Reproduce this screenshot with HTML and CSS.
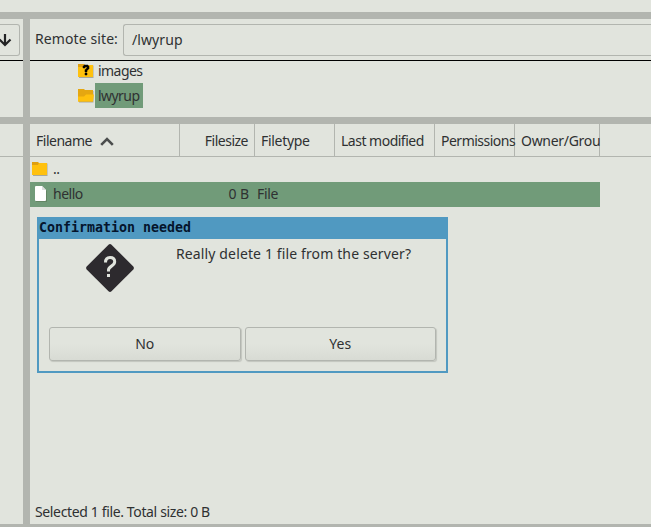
FILE: index.html
```
<!DOCTYPE html>
<html lang="en">
<head>
<meta charset="utf-8">
<title>Remote site</title>
<link rel="stylesheet" href="styles.css">
</head>
<body>
<div class="window">
  <div class="strip"></div>
  <div class="panes">
    <section class="pane local-tree">
      <div class="site-bar local-bar">
        <div class="dropdown">
          <svg width="14" height="14" viewBox="0 0 14 14"><path d="M7 1v11M1.500 6.500 7 12l5.500-5.500" fill="none" stroke="#222324" stroke-width="2.200"/></svg>
        </div>
      </div>
    </section>
    <section class="pane remote-tree">
      <div class="site-bar">
        <span class="site-label">Remote site:</span>
        <div class="path"><span class="path-text">/lwyrup</span></div>
      </div>
      <div class="tree">
        <div class="node">
          <svg width="16" height="15" viewBox="0 0 16 15"><path d="M1 2.500h14.500V15H1z" fill="#a8a99c"/><path d="M0 1h6l1 1h8v12H0z" fill="#e0a010"/><path d="M0 4h5l2-2h8v12H0z" fill="#ffc10e"/><path d="M5 5V3h1V2h4v1h1v3h-1v1H9v2H7V6.500h1v-1h1V4H7v1zM7 10h2v2H7z" fill="#000" stroke="#000" stroke-width=".5"/></svg>
          <span class="node-name images">images</span>
        </div>
        <div class="node">
          <svg width="16" height="15" viewBox="0 0 16 15"><path d="M1 3h14.500v11.500H1z" fill="#a8a99c"/><path d="M0 1h6l1 1h8v11.500H0z" fill="#e5a711"/><path d="M0 8.500h6l2-2h8l-1 7H0z" fill="#ffc10e"/></svg>
          <span class="node-name lwyrup selected">lwyrup</span>
        </div>
      </div>
    </section>
    <section class="pane local-list"><div class="columns"></div></section>
    <section class="pane remote-list">
      <div class="columns">
        <div class="column"><span class="c-name">Filename</span><svg class="sort" width="14" height="9" viewBox="0 0 14 9"><path d="M1.200 7.800 7 2l5.800 5.800" fill="none" stroke="#4b4d4d" stroke-width="2.600"/></svg></div>
        <div class="column right"><span class="c-size">Filesize</span></div>
        <div class="column"><span class="c-type">Filetype</span></div>
        <div class="column"><span class="c-mod">Last modified</span></div>
        <div class="column"><span class="c-perm">Permissions</span></div>
        <div class="column"><span class="c-own">Owner/Grou</span></div>
      </div>
      <div class="file">
        <div class="cell name"><svg width="16" height="15" viewBox="0 0 16 15"><path d="M1 2.500h14.500V15H1z" fill="#a8a99c"/><path d="M0 1h6l1 1h8v12H0z" fill="#e0a010"/><path d="M0 4h6l1-2h8v12H0z" fill="#ffc10e"/></svg><span class="dots">..</span></div>
      </div>
      <div class="file chosen">
        <div class="cell name"><svg width="16" height="16" viewBox="0 0 16 16"><path d="M4 1h7l4 4v11H4z" fill="#60815f" opacity=".8"/><path d="M3 1q0-1 1-1h6l4 4v10q0 1-1 1H4q-1 0-1-1z" fill="#fff"/><path d="M10 0l4 4h-4z" fill="#dedede"/></svg><span class="hello">hello</span></div>
        <div class="cell right"><span class="zero">0 B</span></div>
        <div class="cell type"><span class="kind">File</span></div>
      </div>
      <div class="status"><span class="status-text">Selected 1 file. Total size: 0 B</span></div>
    </section>
  </div>
  <div class="strip foot"></div>
</div>

<div class="dialog" role="dialog">
  <div class="title"><span class="title-text">Confirmation needed</span></div>
  <div class="message">
    <svg width="48" height="48" viewBox="0 0 48 48"><path d="M22.500.7q1.500-1.200 3 0l21.800 21.800q1.200 1.500 0 3L25.500 47.300q-1.500 1.200-3 0L.7 25.500q-1.200-1.500 0-3z" fill="#2d2a2e"/><path d="M19.500 18.500c0-3 1.500-5 4.500-5s4.700 1.700 4.700 4.300c0 4.400-6.200 4.200-6.200 8.200v1.500" fill="none" stroke="#e1e4dd" stroke-width="3"/><path d="M21 30h3v3h-3z" fill="#e1e4dd"/></svg>
    <p><span class="question">Really delete 1 file from the server?</span></p>
  </div>
  <div class="actions">
    <button>No</button>
    <button>Yes</button>
  </div>
</div>
</body>
</html>
```
FILE: styles.css
```
* { box-sizing: border-box; }
body {
  margin: 0;
  height: 527px;
  overflow: hidden;
  background: #e1e4dd;
  color: #2f3132;
  font: 14px/20px "Noto Sans", sans-serif;
}
svg { display: block; flex: none; }
span { white-space: nowrap; }
.window {
  height: 527px;
  padding-top: 12px;
  display: flex;
  flex-direction: column;
}
.strip { flex: none; height: 7px; background: #b2b5af; }
.foot { height: 3px; }
.panes {
  flex: 1;
  display: grid;
  grid-template-columns: 23px 1fr;
  grid-template-rows: 98px 400px;
  gap: 7px;
  background: #b2b5af;
}
.pane { min-width: 0; background: #e1e4dd; overflow: hidden; }
.site-bar {
  height: 42px;
  padding: 5px 0 4px 5px;
  display: flex;
  align-items: flex-start;
  border-bottom: 1px solid #000;
}
.site-label { width: 88px; padding-top: 5px; letter-spacing: .1px; }
.path {
  flex: 1;
  height: 32px;
  padding: 5px 8px;
  border: 1px solid #b2b5af;
  border-right: 0;
  border-radius: 3px 0 0 3px;
  letter-spacing: .1px;
}
.local-bar { padding-left: 0; }
.dropdown {
  width: 20px;
  height: 32px;
  padding: 8px 0;
  border: 1px solid #b2b5af;
  border-left: 0;
  border-radius: 0 3px 3px 0;
}
.dropdown svg { margin-left: -2px; }
.tree { padding-left: 48px; margin-top: -3px; letter-spacing: -.55px; }
.node { display: flex; align-items: center; height: 25px; }
.node svg { margin-top: -1px; }
.node-name { height: 25px; margin-left: 1px; padding: 3px 3px 0; }
.selected { background: #719b79; }
.lwyrup { width: 48px; }
.remote-list { display: flex; flex-direction: column; letter-spacing: -.5px; }
.columns {
  flex: none;
  height: 33px;
  display: grid;
  grid-template-columns: 150px 75px 80px 100px 80px 85px;
  border-bottom: 1px solid #b2b5af;
}
.column {
  display: flex;
  align-items: center;
  padding: 2px 0 0 6px;
  border-right: 1px solid #b2b5af;
}
.c-type { letter-spacing: -.3px; }
.c-own { letter-spacing: -.3px; }
.right { justify-content: flex-end; padding-right: 6px; }
.sort { margin-left: 8px; }
.file {
  width: 570px;
  height: 25px;
  display: grid;
  grid-template-columns: 150px 75px 345px;
}
.chosen { background: #719b79; }
.cell { display: flex; align-items: center; padding-bottom: 2px; }
.cell.right { padding-right: 6px; letter-spacing: -.1px; }
.name svg { margin: 0 5px 0 2px; }
.type { padding-left: 2px; letter-spacing: -.3px; }
.status { margin-top: auto; padding: 0 5px 2px; letter-spacing: -.36px; }
.dialog {
  position: absolute;
  left: 37px;
  top: 217px;
  width: 411px;
  height: 156px;
  border: 2px solid #5099c1;
  background: #e1e4dd;
}
.title {
  height: 20px;
  background: #5099c1;
  color: #04142c;
  font: bold 13.300px/17px "DejaVu Sans Mono", monospace;
}
.title-text { display: block; }
.message { height: 88px; display: flex; padding: 5px 0 0 47px; }
.message p { margin: 0 0 0 42px; letter-spacing: .13px; }
.actions { display: flex; gap: 4px; padding: 0 10px; }
button {
  flex: 1;
  height: 34px;
  padding: 0 0 1px;
  border: 1px solid #b2b5af;
  border-radius: 3px;
  background: linear-gradient(#e1e4dd 50%, #d8dbd4);
  box-shadow: 1px 1px 1px #c2c5be;
  color: inherit;
  font: inherit;
}
```
